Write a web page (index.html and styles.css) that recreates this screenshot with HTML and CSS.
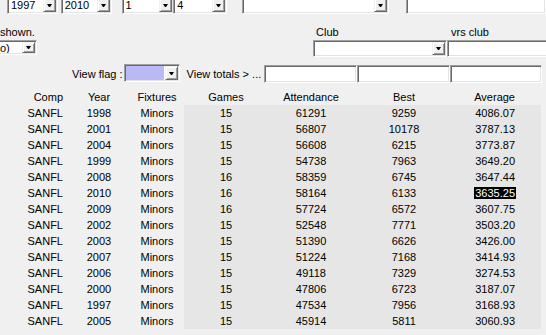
FILE: index.html
```html
<!DOCTYPE html>
<html lang="en">
<head>
    <meta charset="UTF-8">
    <title>Attendance by year</title>
    <link rel="stylesheet" href="styles.css">
</head>
<body>
    <!-- filter combos (top of the form is scrolled off) -->
    <div class="row row-top">
        <div class="combo sunken w-year"><span class="val">1997</span><span class="btn"></span></div>
        <div class="combo sunken w-year gap-3"><span class="val">2010</span><span class="btn"></span></div>
        <div class="combo sunken w-round gap-10"><span class="val">1</span><span class="btn"></span></div>
        <div class="combo sunken w-round2 join"><span class="val">4</span><span class="btn"></span></div>
        <div class="combo sunken w-wide gap-15"><span class="val"></span><span class="btn"></span></div>
        <div class="edit sunken w-edit gap-17"></div>
    </div>

    <div class="row row-club">
        <div class="group g-shown">
            <label class="lbl lbl-shown">shown.</label>
            <div class="combo sunken h-15"><span class="val val-shown">o)</span><span class="btn"></span></div>
        </div>
        <div class="group g-club">
            <label class="lbl">Club</label>
            <div class="combo sunken h-17"><span class="val"></span><span class="btn"></span></div>
        </div>
        <div class="group g-vrs">
            <label class="lbl">vrs club</label>
            <div class="edit sunken h-17"></div>
        </div>
    </div>

    <div class="row row-view">
        <span class="txt">View flag :</span>
        <div class="combo sunken w-flag"><span class="val flag"></span><span class="btn"></span></div>
        <span class="txt totals">View totals &gt; ...</span>
        <div class="edit sunken tot"></div>
        <div class="edit sunken tot"></div>
        <div class="edit sunken tot last"></div>
    </div>

    <table class="stats">
        <colgroup>
            <col style="width:70px"><col style="width:58px"><col style="width:56px">
            <col style="width:84px"><col style="width:86px"><col style="width:100px"><col style="width:87px">
        </colgroup>
        <thead>
            <tr>
                <th class="comp">Comp</th><th>Year</th><th class="fix">Fixtures</th>
                <th>Games</th><th>Attendance</th><th>Best</th><th class="avg">Average</th>
            </tr>
        </thead>
        <tbody id="rows"></tbody>
    </table>

    <script>
        var data = [
            ['1998', 15, 61291, 9259, '4086.07'],
            ['2001', 15, 56807, 10178, '3787.13'],
            ['2004', 15, 56608, 6215, '3773.87'],
            ['1999', 15, 54738, 7963, '3649.20'],
            ['2008', 16, 58359, 6745, '3647.44'],
            ['2010', 16, 58164, 6133, '3635.25'],
            ['2009', 16, 57724, 6572, '3607.75'],
            ['2002', 15, 52548, 7771, '3503.20'],
            ['2003', 15, 51390, 6626, '3426.00'],
            ['2007', 15, 51224, 7168, '3414.93'],
            ['2006', 15, 49118, 7329, '3274.53'],
            ['2000', 15, 47806, 6723, '3187.07'],
            ['1997', 15, 47534, 7956, '3168.93'],
            ['2005', 15, 45914, 5811, '3060.93']
        ];
        var body = document.getElementById('rows');
        data.forEach(function (r) {
            var tr = document.createElement('tr');
            var avg = r[0] === '2010' ? '<span class="sel">' + r[4] + '</span>' : r[4];
            tr.innerHTML =
                '<td class="comp">SANFL</td><td>' + r[0] + '</td><td class="fix">Minors</td>' +
                '<td class="num">' + r[1] + '</td><td class="num">' + r[2] + '</td>' +
                '<td class="num">' + r[3] + '</td><td class="num avg">' + avg + '</td>';
            body.appendChild(tr);
        });
    </script>
</body>
</html>
```

FILE: styles.css
```css
body {
    margin: 0;
    background-color: #f0f0f0;
    font-family: "Liberation Sans", Arial, sans-serif;
    font-size: 11px;
    color: #000;
    overflow: hidden;
}

/* classic sunken 3D edge */
.sunken {
    box-sizing: border-box;
    background-color: #fff;
    border: 1px solid;
    border-color: #a0a0a0 #fff #fff #a0a0a0;
    box-shadow: inset 1px 1px #696969, inset -1px -1px #e3e3e3;
}

.combo {
    display: flex;
    padding: 1px;
    height: 18px;
}
.combo .val {
    flex: 1;
    padding-left: 2px;
    display: flex;
    align-items: center;
    white-space: nowrap;
    overflow: hidden;
}
.combo .btn {
    width: 13px;
    box-sizing: border-box;
    background-color: #f0f0f0;
    border: 1px solid;
    border-color: #f0f0f0 #696969 #696969 #f0f0f0;
    box-shadow: inset 1px 1px #fff, inset -1px -1px #a0a0a0;
    display: flex;
    align-items: center;
    justify-content: center;
}
.combo .btn::after {
    content: "";
    width: 1px;
    border-left: 2px solid transparent;
    border-right: 2px solid transparent;
    border-top: 3px solid #000;
}
.edit {
    height: 18px;
}

.row {
    display: flex;
}

/* top row */
.row-top {
    margin-top: -4px;
    padding-left: 7px;
}
.w-year { width: 52px; }
.w-round { width: 54px; }
.w-round2 { width: 55px; }
.w-wide { width: 151px; }
.w-edit { width: 140px; flex-shrink: 0; }
.gap-3 { margin-left: 3px; }
.gap-10 { margin-left: 10px; }
.gap-15 { margin-left: 15px; }
.gap-17 { margin-left: 17px; }
.join { margin-left: -1px; }

/* club row */
.row-club {
    margin-top: 12px;
}
.group {
    display: flex;
    flex-direction: column;
    flex-shrink: 0;
}
.lbl {
    line-height: 13px;
    height: 13px;
    margin-bottom: 1px;
    padding-left: 3px;
    white-space: nowrap;
}
.g-shown {
    margin-left: -14px;
    width: 51px;
}
.lbl-shown {
    padding-left: 14px;
}
.combo .val-shown {
    padding-left: 12px;
}
.g-club {
    margin-left: 276px;
    width: 134px;
}
.g-vrs {
    width: 120px;
}
.g-vrs .lbl {
    padding-left: 4px;
}
.h-15 { height: 15px; }
.h-17 { height: 17px; }

/* view row */
.row-view {
    margin-top: 7px;
    padding-left: 72px;
    align-items: center;
    height: 18px;
}
.txt {
    white-space: nowrap;
    padding-top: 1px;
}
.w-flag {
    width: 56px;
    margin-left: 1px;
}
.flag {
    background-color: #b9b9f7;
    margin-right: 1px;
}
.totals {
    margin-left: 7px;
    width: 77px;
}
.tot {
    width: 93px;
    margin-top: 2px;
}
.tot.last {
    width: 92px;
}

/* results grid */
.stats {
    margin-top: 7px;
    border-collapse: collapse;
    border-spacing: 0;
    table-layout: fixed;
    width: 541px;
}
.stats th,
.stats td {
    padding: 1px 0 0 0;
    height: 15px;
    line-height: 15px;
    font-weight: normal;
    text-align: center;
    white-space: nowrap;
}
.stats .comp {
    text-align: right;
    padding-right: 7px;
}
.stats .fix {
    padding-left: 2px;
}
.stats .avg {
    text-align: right;
    padding-right: 26px;
}
.stats td.num {
    background-color: #e6e6e6;
}
.sel {
    background-color: #000;
    color: #fff;
    padding: 0 1px;
    margin-right: -1px;
}
```
